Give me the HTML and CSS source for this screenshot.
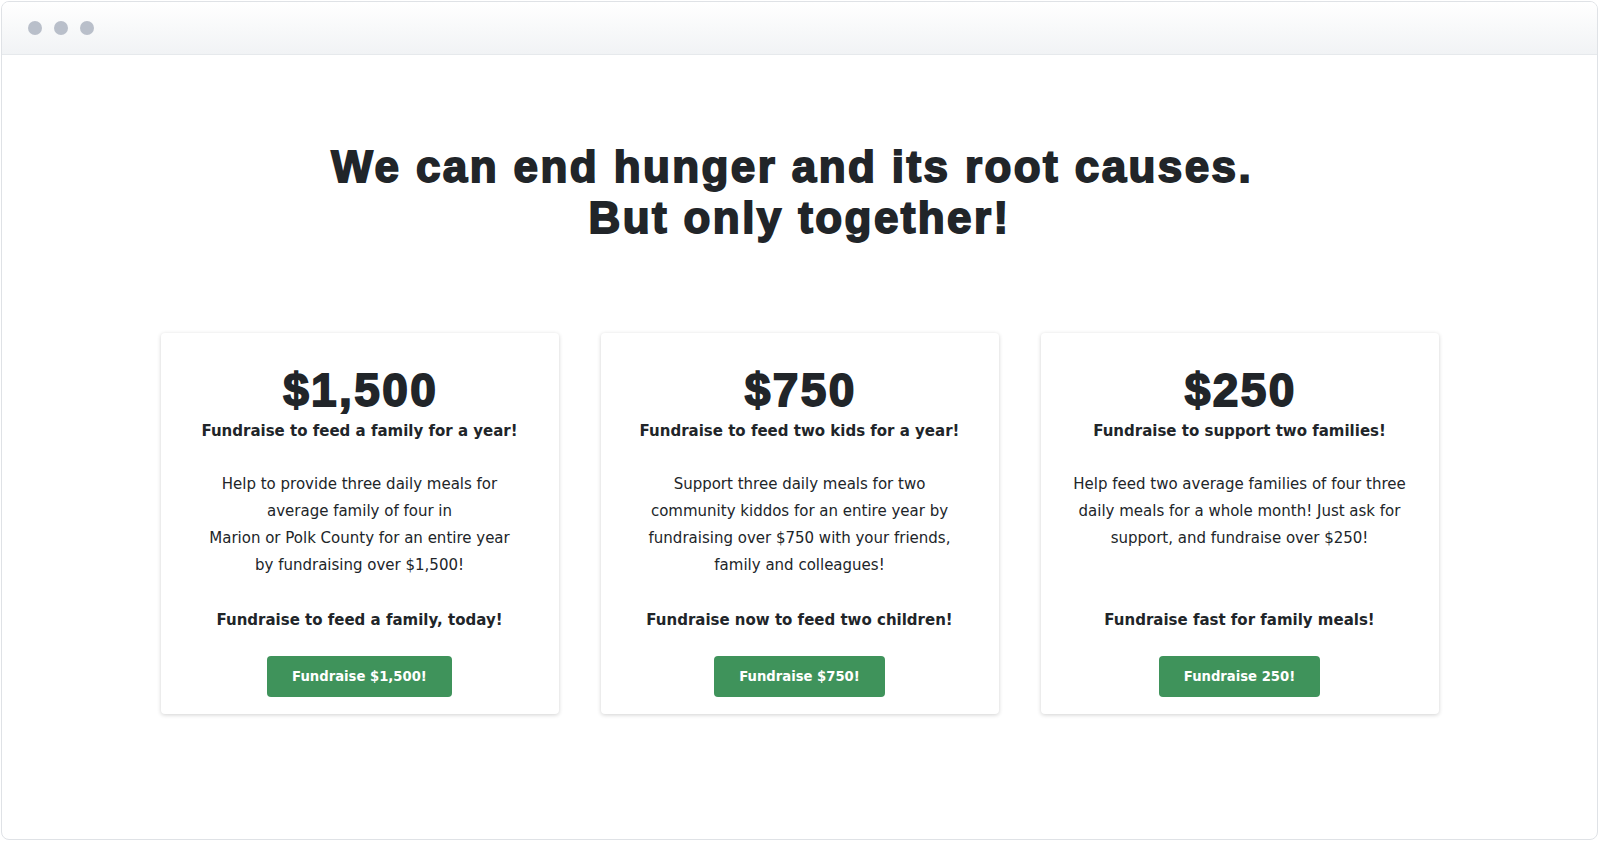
FILE: index.html
```html
<!DOCTYPE html>
<html lang="en">
<head>
<meta charset="utf-8">
<title>Fundraise</title>
<link rel="stylesheet" href="styles.css">
</head>
<body>
<div class="window">
  <div class="titlebar">
    <span class="dot"></span><span class="dot"></span><span class="dot"></span>
  </div>
  <main class="content">
    <h1 class="headline">We can end hunger and its root causes.&nbsp;<br>But only together!</h1>
    <section class="cards">
      <article class="card">
        <div class="amount">$1,500</div>
        <h2 class="subtitle">Fundraise to feed a family for a year!</h2>
        <p class="desc">Help to provide three daily meals for<br>average family of four in<br>Marion or Polk County for an entire year<br>by fundraising over $1,500!</p>
        <div class="foot">
          <p class="cta">Fundraise to feed a family, today!</p>
          <a class="btn" href="#">Fundraise $1,500!</a>
        </div>
      </article>
      <article class="card">
        <div class="amount">$750</div>
        <h2 class="subtitle">Fundraise to feed two kids for a year!</h2>
        <p class="desc">Support three daily meals for two<br>community kiddos for an entire year by<br>fundraising over $750 with your friends,<br>family and colleagues!</p>
        <div class="foot">
          <p class="cta">Fundraise now to feed two children!</p>
          <a class="btn" href="#">Fundraise $750!</a>
        </div>
      </article>
      <article class="card">
        <div class="amount">$250</div>
        <h2 class="subtitle">Fundraise to support two families!</h2>
        <p class="desc">Help feed two average families of four three<br>daily meals for a whole month! Just ask for<br>support, and fundraise over $250!</p>
        <div class="foot">
          <p class="cta">Fundraise fast for family meals!</p>
          <a class="btn" href="#">Fundraise 250!</a>
        </div>
      </article>
    </section>
  </main>
</div>
</body>
</html>
```
FILE: styles.css
```css
* { box-sizing: border-box; }
html, body { margin: 0; padding: 0; background: #ffffff; }
body { font-family: "DejaVu Sans", Verdana, sans-serif; color: #212529; }

.window {
  margin: 1px 2px 1px 1px;
  height: calc(100vh - 2px);
  border: 1px solid #dfe2e6;
  border-radius: 8px;
  overflow: hidden;
  display: flex;
  flex-direction: column;
}

.titlebar {
  height: 53px;
  flex: none;
  display: flex;
  align-items: center;
  gap: 12px;
  padding: 0 0 0 26px;
  background: linear-gradient(#ffffff, #f1f3f5);
  border-bottom: 1px solid #e6e9ec;
}
.dot {
  width: 14px;
  height: 14px;
  border-radius: 50%;
  background: #b9bfca;
}

.content {
  display: flex;
  flex-direction: column;
  align-items: center;
}

.headline {
  margin: 86px 0 0;
  font-family: "Liberation Sans", Arial, sans-serif;
  font-weight: 700;
  font-size: 44px;
  line-height: 51px;
  text-align: center;
  color: #212529;
  -webkit-text-stroke: 1.8px #212529;
  letter-spacing: 2.4px;
}

.cards {
  margin-top: 90px;
  display: grid;
  grid-template-columns: repeat(3, 398px);
  gap: 42px;
}

.card {
  background: #fff;
  border-radius: 4px;
  box-shadow: 0 1px 4px rgba(0, 0, 0, 0.18);
  padding: 32px 20px 17px;
  display: flex;
  flex-direction: column;
  align-items: center;
  text-align: center;
  height: 381px;
}

.amount {
  font-family: "Liberation Sans", Arial, sans-serif;
  font-weight: 700;
  font-size: 46px;
  line-height: 50px;
  -webkit-text-stroke: 1.8px #212529;
  letter-spacing: 2.4px;
  padding-left: 2.4px;
}

.subtitle {
  margin: 4px 0 0;
  font-size: 15px;
  font-weight: 700;
  line-height: 24px;
  white-space: nowrap;
}

.desc {
  margin: 28px 0 0;
  font-size: 15px;
  line-height: 27px;
  white-space: nowrap;
}

.foot {
  margin-top: auto;
  display: flex;
  flex-direction: column;
  align-items: center;
}

.cta {
  margin: 0;
  font-size: 15px;
  font-weight: 700;
  line-height: 24px;
  white-space: nowrap;
}

.btn {
  margin-top: 24px;
  display: inline-flex;
  align-items: center;
  justify-content: center;
  height: 41px;
  padding: 0 25px;
  background: #3f935b;
  color: #ffffff;
  border-radius: 4px;
  font-size: 13.2px;
  font-weight: 700;
  text-decoration: none;
}
```
